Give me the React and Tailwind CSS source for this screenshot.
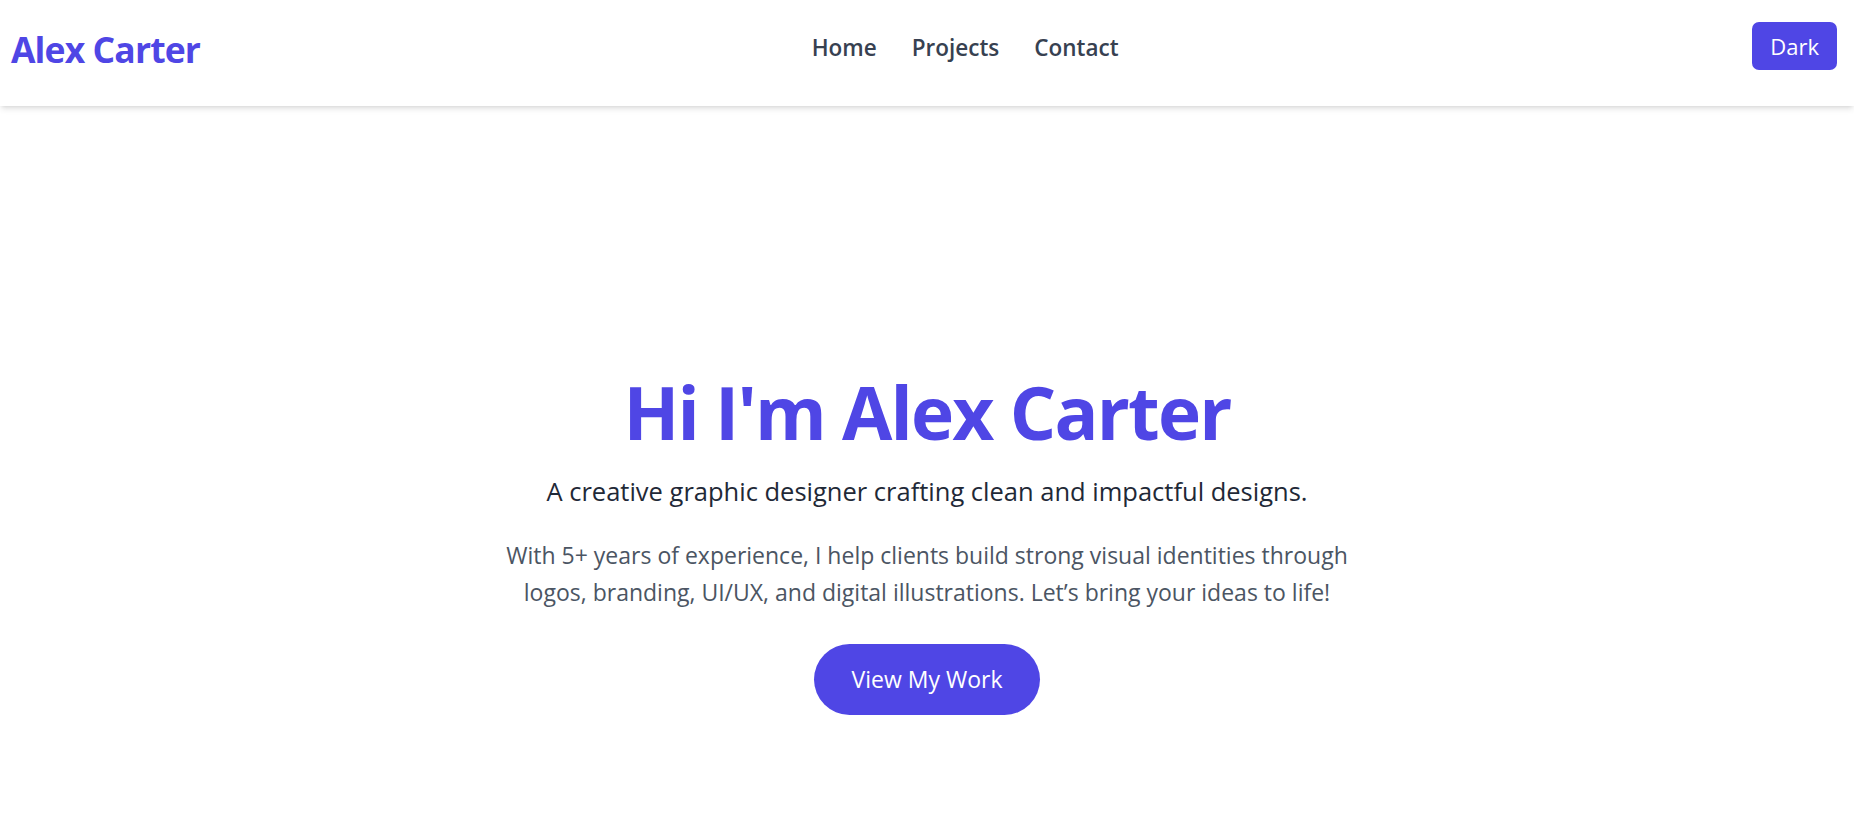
import React from 'react';

const links = ['Home', 'Projects', 'Contact'];

export default function App() {
  return (
    <div className="min-h-screen bg-white font-['Open_Sans',sans-serif]">
      {/* Header */}
      <header className="h-[106px] pb-[14px] pl-[11px] pr-[17px] flex items-center justify-between bg-white shadow-md">
        <h1 className="mt-[7px] text-[35.5px] font-bold text-[#4f46e5] tracking-tight">Alex Carter</h1>
        <nav className="mt-[4px] mr-[22px] flex items-center gap-[35px]">
          {links.map((l) => (
            <a key={l} href="#" className="text-[22.5px] font-semibold text-[#374151] hover:text-[#4f46e5]">
              {l}
            </a>
          ))}
        </nav>
        <button className="h-[48px] px-[18px] rounded-[7px] bg-[#4f46e5] text-white text-[22px]">Dark</button>
      </header>

      {/* Hero */}
      <section className="flex flex-col items-center text-center pt-[266px] pb-[100px]">
        <h2 className="text-[73px] leading-[80px] font-bold text-[#4f46e5] tracking-tight">Hi I'm Alex Carter</h2>
        <p className="mt-[23px] text-[25.5px] leading-[32px] text-[#1f2937]">
          A creative graphic designer crafting clean and impactful designs.
        </p>
        <p className="mt-[30px] text-[23px] leading-[37px] text-[#4b5563] max-w-[1000px]">
          With 5+ years of experience, I help clients build strong visual identities through
          <br />
          logos, branding, UI/UX, and digital illustrations. Let’s bring your ideas to life!
        </p>
        <button className="mt-[33px] h-[71px] px-[38px] rounded-full bg-[#4f46e5] text-white text-[23px]">
          View My Work
        </button>
      </section>
    </div>
  );
}
